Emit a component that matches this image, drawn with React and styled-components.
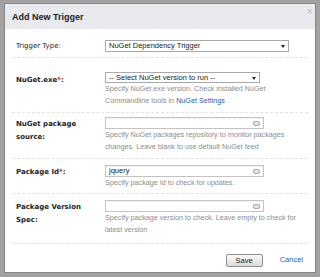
import React from "react";
import styled, { createGlobalStyle } from "styled-components";

const Global = createGlobalStyle`
  html, body { margin: 0; padding: 0; background: #a2a2a2; }
  body { width: 320px; height: 277px; overflow: hidden; }
  * { box-sizing: border-box; }
`;

const Page = styled.div`
  width: 320px;
  height: 277px;
  padding: 3px 4px 4px 4px;
  background: #a2a2a2;
`;

const Dialog = styled.div`
  height: 100%;
  display: flex;
  flex-direction: column;
  background: #ffffff;
  border: 1px solid #858585;
`;

const Header = styled.div`
  height: 25px;
  flex: none;
  display: flex;
  align-items: center;
  justify-content: space-between;
  padding: 0 2px 0 7px;
  background: #e9eaee;
`;

const Title = styled.div`
  font-family: "Liberation Sans", Arial, sans-serif;
  font-weight: bold;
  font-size: 9px;
  color: #1c1c1c;
`;

const Close = styled.div`
  align-self: flex-start;
  margin-top: 4px;
  font-family: "DejaVu Sans", sans-serif;
  font-size: 8px;
  color: #b4b4b4;
  line-height: 8px;
`;

const Body = styled.div`
  padding: 0 7px;
  flex: none;
`;

const Row = styled.div`
  display: grid;
  grid-template-columns: 89px 1fr;
  height: ${(p) => p.$h}px;
  padding: ${(p) => p.$pt}px 0 0 4px;
  border-bottom: 1px dashed #e2e2e2;
`;

const Label = styled.div`
  font-family: "DejaVu Sans", Verdana, sans-serif;
  font-weight: ${(p) => (p.$plain ? "normal" : "bold")};
  font-size: 7px;
  line-height: 12.5px;
  margin-top: ${(p) => p.$mt || 0}px;
  color: #232323;
`;

const Req = styled.span`
  color: #e02020;
`;

const Field = styled.div`
  display: flex;
  flex-direction: column;
`;

const Select = styled.div`
  position: relative;
  width: ${(p) => p.$w}px;
  height: ${(p) => p.$hh || 12}px;
  border: 1px solid #a9a9a9;
  background: #fff;
  font-family: "Liberation Sans", Arial, sans-serif;
  font-size: 7.5px;
  line-height: 10px;
  padding-left: 3px;
  color: #222;
  display: flex;
  align-items: center;
`;

const Arrow = styled.span`
  position: absolute;
  right: 3px;
  top: 4px;
  width: 0;
  height: 0;
  border-left: 2.5px solid transparent;
  border-right: 2.5px solid transparent;
  border-top: 3px solid #222;
`;

const Input = styled.div`
  position: relative;
  width: 159px;
  height: 12px;
  border: 1px solid #c3c3c3;
  box-shadow: inset 0 1px 1px rgba(0, 0, 0, 0.06);
  background: #fff;
  font-family: "Liberation Sans", Arial, sans-serif;
  font-size: 7.5px;
  line-height: 10px;
  padding-left: 3px;
  color: #222;
`;

const InputIcon = styled.svg`
  position: absolute;
  right: 3px;
  top: 3px;
`;

const Desc = styled.div`
  font-family: "Liberation Sans", Arial, sans-serif;
  font-size: 7.2px;
  line-height: 12px;
  color: #8c8c8c;
  width: 205px;
  white-space: pre-line;
`;

const Link = styled.span`
  color: #2a62b4;
`;

const Footer = styled.div`
  flex: 1;
  display: flex;
  align-items: flex-start;
  justify-content: flex-end;
  gap: 17px;
  padding: 10px 12px 0 0;
`;

const Button = styled.div`
  width: 37px;
  height: 13px;
  border: 1px solid #8d8d8d;
  border-radius: 2px;
  background: linear-gradient(#fbfbfb, #dcdcdc);
  font-family: "Liberation Sans", Arial, sans-serif;
  font-size: 7.5px;
  color: #222;
  display: flex;
  align-items: center;
  justify-content: center;
`;

const Cancel = styled.div`
  margin-top: 1px;
  font-family: "Liberation Sans", Arial, sans-serif;
  font-size: 7.5px;
  line-height: 10px;
  color: #2a62b4;
`;

const FieldIcon = () => (
  <InputIcon width="7" height="5" viewBox="0 0 7 5">
    <rect x="0.5" y="0.5" width="6" height="4" rx="1.5" fill="#e4e4e4" stroke="#a8a8a8" />
  </InputIcon>
);

export default function App() {
  return (
    <>
      <Global />
      <Page>
        <Dialog>
          <Header>
            <Title>Add New Trigger</Title>
            <Close>×</Close>
          </Header>
          <Body>
            <Row $h={29} $pt={11}>
              <Label $plain>Trigger Type:</Label>
              <Field>
                <Select $w={184}>
                  NuGet Dependency Trigger
                  <Arrow />
                </Select>
              </Field>
            </Row>
            <Row $h={55} $pt={14}>
              <Label $mt={2}>
                NuGet.exe<Req>*</Req>:
              </Label>
              <Field>
                <Select $w={155} $hh={11}>
                  -- Select NuGet version to run --
                  <Arrow />
                </Select>
                <Desc>
                  Specify NuGet.exe version. Check installed NuGet{"\n"}Commandline tools in{" "}
                  <Link>NuGet Settings</Link>
                </Desc>
              </Field>
            </Row>
            <Row $h={46} $pt={4}>
              <Label $mt={1}>
                NuGet package
                <br />
                source:
              </Label>
              <Field>
                <Input>
                  <FieldIcon />
                </Input>
                <Desc>
                  Specify NuGet packages repository to monitor packages{"\n"}changes. Leave blank to use
                  default NuGet feed
                </Desc>
              </Field>
            </Row>
            <Row $h={35} $pt={6}>
              <Label $mt={1}>
                Package Id<Req>*</Req>:
              </Label>
              <Field>
                <Input>
                  jquery
                  <FieldIcon />
                </Input>
                <Desc>Specify package Id to check for updates.</Desc>
              </Field>
            </Row>
            <Row $h={50} $pt={6}>
              <Label $mt={1}>
                Package Version
                <br />
                Spec:
              </Label>
              <Field>
                <Input>
                  <FieldIcon />
                </Input>
                <Desc>
                  Specify package version to check. Leave empty to check for{"\n"}latest version
                </Desc>
              </Field>
            </Row>
          </Body>
          <Footer>
            <Button>Save</Button>
            <Cancel>Cancel</Cancel>
          </Footer>
        </Dialog>
      </Page>
    </>
  );
}
